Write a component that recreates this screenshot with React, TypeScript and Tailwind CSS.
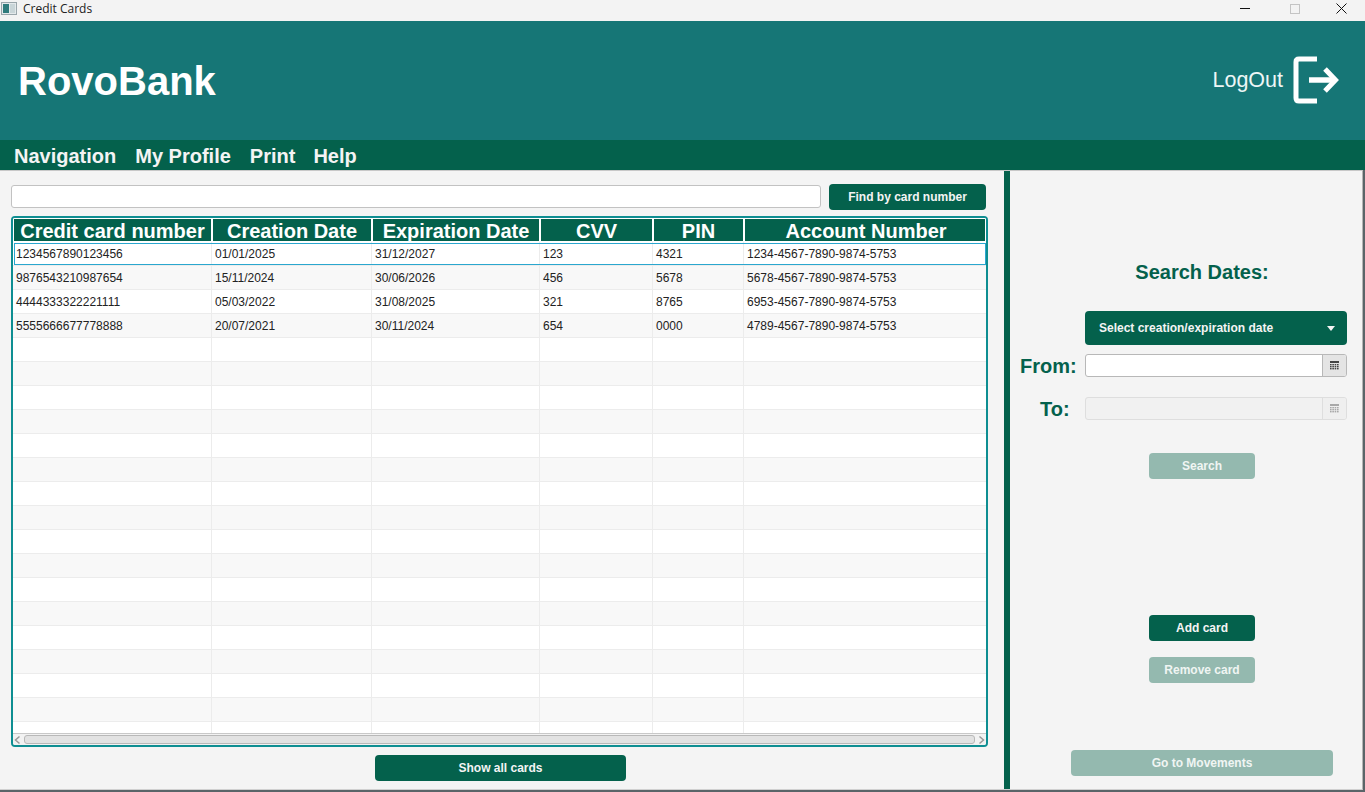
import React from 'react';

const cols = 'grid grid-cols-[199px_160px_168px_113px_91px_243px]';
const headerCols = 'grid grid-cols-[199px_160px_168px_113px_91px_240px]';

const headers = ['Credit card number', 'Creation Date', 'Expiration Date', 'CVV', 'PIN', 'Account Number'];

const cards = [
  ['1234567890123456', '01/01/2025', '31/12/2027', '123', '4321', '1234-4567-7890-9874-5753'],
  ['9876543210987654', '15/11/2024', '30/06/2026', '456', '5678', '5678-4567-7890-9874-5753'],
  ['4444333322221111', '05/03/2022', '31/08/2025', '321', '8765', '6953-4567-7890-9874-5753'],
  ['5555666677778888', '20/07/2021', '30/11/2024', '654', '0000', '4789-4567-7890-9874-5753'],
];

const rows: string[][] = [...cards, ...Array.from({ length: 17 }, () => ['', '', '', '', '', ''])];

const CalendarIcon = ({ color }: { color: string }) => (
  <svg width="9" height="9" viewBox="0 0 9 9">
    <rect x="0" y="0" width="9" height="2" fill={color} />
    {[3, 5, 7].map((y) =>
      [0, 2.33, 4.66, 7].map((x) => <rect key={`${x}-${y}`} x={x} y={y} width="1.6" height="1.4" fill={color} />),
    )}
  </svg>
);

const App: React.FC = () => {
  return (
    <div className="h-[792px] w-[1365px] overflow-hidden bg-[#5a6468] font-['Liberation_Sans',sans-serif]">
      {/* Window title bar */}
      <div className="flex h-[21px] items-start bg-[#f3f3f3] pl-[1px] pt-[2px]">
        <svg width="16" height="13" viewBox="0 0 16 13">
          <rect x="0.5" y="0.5" width="15" height="12" fill="#e4e9eb" stroke="#9aa6ab" />
          <rect x="2" y="2" width="6" height="9" fill="#2f7b7c" />
          <rect x="9" y="2" width="5" height="9" fill="#c9d5d8" />
        </svg>
        <span className="ml-[6px] font-['Open_Sans',sans-serif] text-[12px] leading-[13px] text-[#222]">Credit Cards</span>
        <div className="ml-auto flex h-[13px] items-center">
          <svg width="10" height="2" viewBox="0 0 10 2" className="mr-[40px]">
            <rect width="10" height="1" fill="#111" />
          </svg>
          <svg width="10" height="10" viewBox="0 0 10 10" className="mr-[36px]">
            <rect x="0.5" y="0.5" width="9" height="9" fill="none" stroke="#c4c4c4" />
          </svg>
          <svg width="11" height="11" viewBox="0 0 11 11" className="mr-[18px]">
            <path d="M0.5 0.5L10.5 10.5M10.5 0.5L0.5 10.5" stroke="#111" fill="none" />
          </svg>
        </div>
      </div>

      {/* Brand header */}
      <div className="flex h-[119px] items-center justify-between bg-[#167676] pl-[18px] pr-[24px]">
        <h1 className="text-[40px] font-bold text-white">RovoBank</h1>
        <div className="flex items-center">
          <span className="mt-[-1px] text-[21.5px] text-[#eef6f6]">LogOut</span>
          <svg width="48" height="48" viewBox="0 0 48 48" className="ml-[10px] mt-[-1px]" fill="none">
            <path d="M24 3H6Q3 3 3 6V42Q3 45 6 45H24" stroke="white" strokeWidth="5" />
            <path d="M16 24H43" stroke="white" strokeWidth="5.5" />
            <path d="M32 13L42.5 24L32 35" stroke="white" strokeWidth="5" />
          </svg>
        </div>
      </div>

      {/* Menu bar */}
      <div className="flex h-[30px] items-center gap-[19px] bg-[#04614c] pl-[14px] pt-[2px] text-[20px] font-bold text-[#f4f4f4]">
        <span>Navigation</span>
        <span>My Profile</span>
        <span>Print</span>
        <span className="-ml-px">Help</span>
      </div>

      <div className="flex h-[620px] w-[1363px] border-t border-r border-b border-t-[#c8c8c8] border-r-[#b4b4b4] border-b-[#d0d0d0] bg-[#f4f4f4]">
        {/* Cards list */}
        <div className="flex w-[1004px] shrink-0 flex-col pl-[11px] pt-[13px]">
          <div className="flex h-[26px] items-start">
            <input className="mt-px h-[23px] w-[810px] rounded-[3px] border border-[#c2c2c2] bg-white" />
            <button className="ml-[8px] h-[26px] w-[157px] rounded-[4px] bg-[#04614c] text-[12px] font-bold text-[#f4f4f4]">
              Find by card number
            </button>
          </div>

          <div className="mt-[6px] flex h-[531px] w-[977px] flex-col overflow-hidden rounded-[4px] border-2 border-[#0e8e92]">
            <div className="h-[25px] shrink-0 border-x border-t border-white bg-white">
              <div className={`${headerCols} h-[24px] border-b-2 border-white bg-[#04614c]`}>
                {headers.map((h, i) => (
                  <div
                    key={h}
                    className={`text-center text-[20px] leading-[24px] font-bold text-white ${
                      i < 5 ? 'border-r-2 border-white' : 'pl-[2px]'
                    }`}
                  >
                    {h}
                  </div>
                ))}
              </div>
            </div>

            <div className="-mt-px min-h-0 flex-1 overflow-hidden">
              {rows.map((row, r) => (
                <div
                  key={r}
                  className={`${cols} relative h-[24px] border-b border-[#ececec] text-[12px] leading-[25px] text-[#222] ${
                    r % 2 === 0 ? 'bg-white' : 'bg-[#f8f8f8]'
                  }`}
                >
                  {row.map((cell, c) => (
                    <div key={c} className={`pl-[3px] ${c < 5 ? 'border-r border-[#ececec]' : ''}`}>
                      {cell}
                    </div>
                  ))}
                  {r === 0 && <div className="absolute bottom-0 left-px right-0 top-px border border-[#2aa7cf] bg-transparent" />}
                </div>
              ))}
            </div>

            {/* Horizontal scrollbar */}
            <div className="flex h-[12px] shrink-0 items-center border-t border-[#c8c8c8] bg-[#f2f2f2]">
              <svg width="11" height="12" viewBox="0 0 11 12" fill="none">
                <path d="M6.5 2.5L2.5 6L6.5 9.5" stroke="#999" strokeWidth="1.5" />
              </svg>
              <div className="h-[9px] flex-1 rounded-[3px] border border-[#b8b8b8] bg-[#e2e2e2]" />
              <svg width="11" height="12" viewBox="0 0 11 12" fill="none">
                <path d="M4.5 2.5L8.5 6L4.5 9.5" stroke="#999" strokeWidth="1.5" />
              </svg>
            </div>
          </div>

          <button className="ml-[364px] mt-[8px] h-[26px] w-[251px] rounded-[4px] bg-[#04614c] text-[12px] font-bold text-[#f4f4f4]">
            Show all cards
          </button>
        </div>

        {/* Divider */}
        <div className="w-[6px] shrink-0 bg-[#04614c]" />

        {/* Date filters and actions */}
        <div className="flex flex-1 flex-col">
          <div className="mt-[89px] pl-[32px] text-center text-[20px] leading-[24px] font-bold text-[#04614c]">
            Search Dates:
          </div>

          <button className="ml-[75px] mt-[27px] flex h-[34px] w-[262px] items-center justify-between rounded-[4px] bg-[#04614c] pl-[14px] pr-[12px] text-[12px] font-bold text-[#f4f4f4]">
            Select creation/expiration date
            <svg width="8" height="5" viewBox="0 0 8 5">
              <path d="M0 0H8L4 5Z" fill="#f4f4f4" />
            </svg>
          </button>

          <div className="mt-[9px] flex h-[23px] items-center">
            <span className="ml-[10px] w-[65px] text-[20px] font-bold text-[#04614c]">From:</span>
            <div className="flex h-[23px] w-[262px] overflow-hidden rounded-[3px] border border-[#b8b8b8] bg-white">
              <div className="flex-1" />
              <div className="flex w-[24px] items-center justify-center border-l border-[#b8b8b8] bg-[#e4e4e4]">
                <CalendarIcon color="#444" />
              </div>
            </div>
          </div>

          <div className="mt-[20px] flex h-[23px] items-center">
            <span className="ml-[30px] w-[45px] text-[20px] font-bold text-[#04614c]">To:</span>
            <div className="flex h-[23px] w-[262px] overflow-hidden rounded-[3px] border border-[#dedede] bg-[#f1f1f1]">
              <div className="flex-1" />
              <div className="flex w-[24px] items-center justify-center border-l border-[#dedede] bg-[#efefef]">
                <CalendarIcon color="#a8a8a8" />
              </div>
            </div>
          </div>

          <button className="ml-[139px] mt-[33px] h-[26px] w-[106px] rounded-[4px] bg-[#94b9af] text-[12px] font-bold text-[#f0f5f3]">
            Search
          </button>

          <button className="ml-[139px] mt-[136px] h-[26px] w-[106px] rounded-[4px] bg-[#04614c] text-[12px] font-bold text-[#f4f4f4]">
            Add card
          </button>

          <button className="ml-[139px] mt-[16px] h-[26px] w-[106px] rounded-[4px] bg-[#94b9af] text-[12px] font-bold text-[#f0f5f3]">
            Remove card
          </button>

          <button className="ml-[61px] mt-[67px] h-[26px] w-[262px] rounded-[4px] bg-[#94b9af] text-[12px] font-bold text-[#f0f5f3]">
            Go to Movements
          </button>
        </div>
      </div>
    </div>
  );
};

export default App;
